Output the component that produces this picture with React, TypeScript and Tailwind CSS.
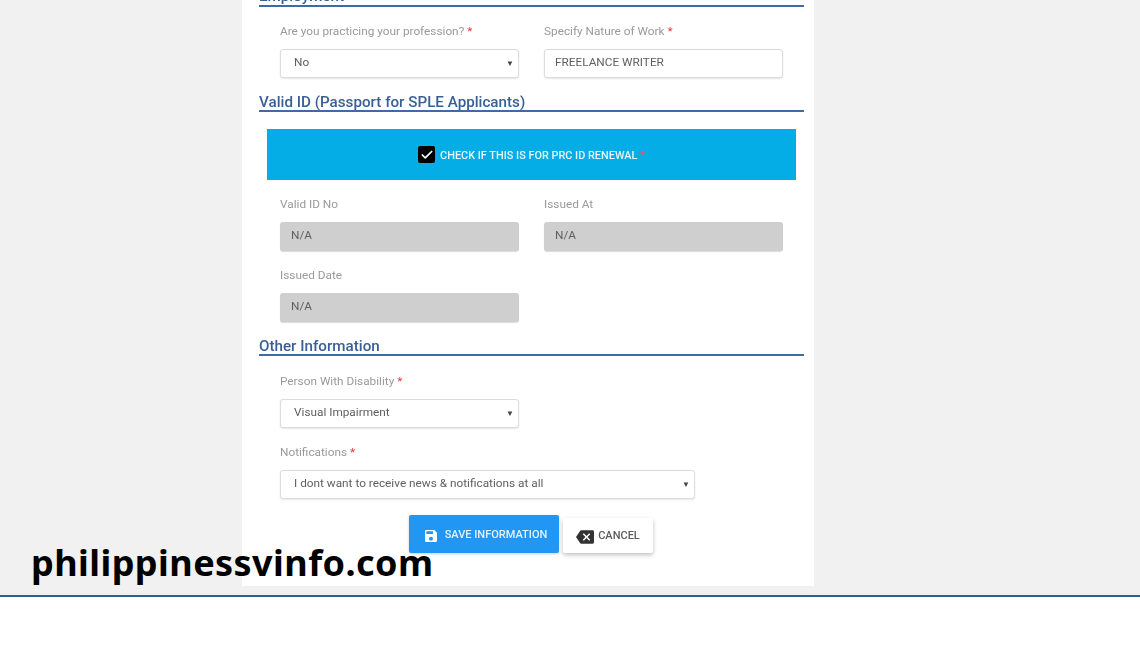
import { Check } from "lucide-react";
import type { ReactNode } from "react";

const font = "font-['Roboto','Liberation_Sans',sans-serif]";

function Label({ text, required }: { text: string; required?: boolean }) {
  return (
    <div className="h-[18px] text-[11.8px] leading-[18px] text-[#9a9a9a]">
      {text}
      {required && <span className="text-[#f0323c]"> *</span>}
    </div>
  );
}

function SelectBox({ value, className }: { value: string; className: string }) {
  return (
    <div
      className={`mt-[9px] flex h-[29px] items-center justify-between rounded-[3px] border border-[#dcdcdc] bg-white pl-[13px] pr-[4px] text-[11.8px] text-[#5f5f5f] shadow-[0_1px_2px_rgba(0,0,0,0.1)] ${className}`}
    >
      <span className="-mt-[2px]">{value}</span>
      <span className="text-[8px] text-[#444]">▼</span>
    </div>
  );
}

function TextBox({ value, disabled }: { value: string; disabled?: boolean }) {
  return (
    <div
      className={`mt-[9px] flex h-[29px] w-[239px] items-center rounded-[3px] text-[11.8px] text-[#5f5f5f] ${
        disabled
          ? "bg-[#cfcfcf] pl-[11px] shadow-[0_1px_1px_rgba(0,0,0,0.15)]"
          : "border border-[#dcdcdc] bg-white pl-[10px] shadow-[0_1px_2px_rgba(0,0,0,0.1)]"
      }`}
    >
      <span className="-mt-[2px]">{value}</span>
    </div>
  );
}

function Heading({ children, className }: { children: ReactNode; className: string }) {
  return (
    <div
      className={`mr-[10px] border-b-2 border-[#3f6aa3] text-[15.2px] font-medium leading-[18px] text-[#3a5f96] ${className}`}
    >
      {children}
    </div>
  );
}

export default function App() {
  return (
    <div className={`relative h-[649px] w-[1140px] overflow-hidden bg-white ${font}`}>
      {/* page area */}
      <div className="h-[595px] bg-[#f1f1f1] pl-[242px]">
        <div className="h-[586px] w-[572px] overflow-hidden bg-white pl-[17px] blur-[0.35px]">
          <Heading className="-mt-[13px] h-[20px]">Employment</Heading>

          <div className="ml-[21px] mt-[15px] flex gap-[25px]">
            <div className="w-[239px]">
              <Label text="Are you practicing your profession?" required />
              <SelectBox value="No" className="w-[239px]" />
            </div>
            <div className="w-[239px]">
              <Label text="Specify Nature of Work" required />
              <TextBox value="FREELANCE WRITER" />
            </div>
          </div>

          <Heading className="mt-[15px] h-[19px]">Valid ID (Passport for SPLE Applicants)</Heading>

          <div className="ml-[8px] mt-[17px] flex h-[51px] w-[529px] items-center justify-center gap-[5px] bg-[#04ade6]">
            <div className="flex h-[17px] w-[17px] items-center justify-center rounded-[2px] bg-black">
              <Check size={14} strokeWidth={3} className="text-white" />
            </div>
            <div className="mt-[3px] text-[10.9px] font-medium text-[#e4f6fc]">
              CHECK IF THIS IS FOR PRC ID RENEWAL <span className="text-[#f0506e]">*</span>
            </div>
          </div>

          <div className="ml-[21px] mt-[15px] flex gap-[25px]">
            <div className="w-[239px]">
              <Label text="Valid ID No" />
              <TextBox value="N/A" disabled />
            </div>
            <div className="w-[239px]">
              <Label text="Issued At" />
              <TextBox value="N/A" disabled />
            </div>
          </div>

          <div className="ml-[21px] mt-[15px] w-[239px]">
            <Label text="Issued Date" />
            <TextBox value="N/A" disabled />
          </div>

          <Heading className="mt-[15px] h-[19px]">Other Information</Heading>

          <div className="ml-[21px] mt-[16px]">
            <Label text="Person With Disability" required />
            <SelectBox value="Visual Impairment" className="w-[239px]" />
          </div>

          <div className="ml-[21px] mt-[15px]">
            <Label text="Notifications" required />
            <SelectBox value="I dont want to receive news & notifications at all" className="w-[415px]" />
          </div>

          <div className="ml-[150px] mt-[16px] flex items-end gap-[4px]">
            <button className="flex h-[38px] w-[150px] items-center justify-center gap-[6px] rounded-[2px] bg-[#2196f3] pl-[2px] pt-[3px] text-[11px] font-medium text-[#e3f2fd] shadow-[0_1px_3px_rgba(0,0,0,0.2)]">
              <svg width="16" height="16" viewBox="0 0 24 24" fill="#fff">
                <path d="M17 3H5a2 2 0 0 0-2 2v14a2 2 0 0 0 2 2h14a2 2 0 0 0 2-2V7l-4-4zm-5 16a3 3 0 1 1 0-6 3 3 0 0 1 0 6zm3-10H5V5h10v4z" />
              </svg>
              SAVE INFORMATION
            </button>
            <button className="flex h-[35px] w-[90px] items-center justify-center gap-[4px] rounded-[2px] bg-white pt-[2px] text-[11px] font-medium text-[#5c5c5c] shadow-[0_2px_4px_rgba(0,0,0,0.25)]">
              <svg width="18" height="18" viewBox="0 0 24 24" fill="#333">
                <path d="M22 3H7c-.69 0-1.23.35-1.59.88L0 12l5.41 8.11c.36.53.9.89 1.59.89h15c1.1 0 2-.9 2-2V5c0-1.1-.9-2-2-2zm-3 12.59L17.59 17 14 13.41 10.41 17 9 15.59 12.59 12 9 8.41 10.41 7 14 10.59 17.59 7 19 8.41 15.41 12 19 15.59z" />
              </svg>
              CANCEL
            </button>
          </div>
        </div>
      </div>

      <div className="h-[2px] bg-[#2d6191]" />

      {/* watermark */}
      <div className="absolute left-[31px] top-[539px] font-['Noto_Sans',sans-serif] text-[36px] font-bold leading-[48px] tracking-[0.45px] text-black">
        philippinessvinfo.com
      </div>
    </div>
  );
}
